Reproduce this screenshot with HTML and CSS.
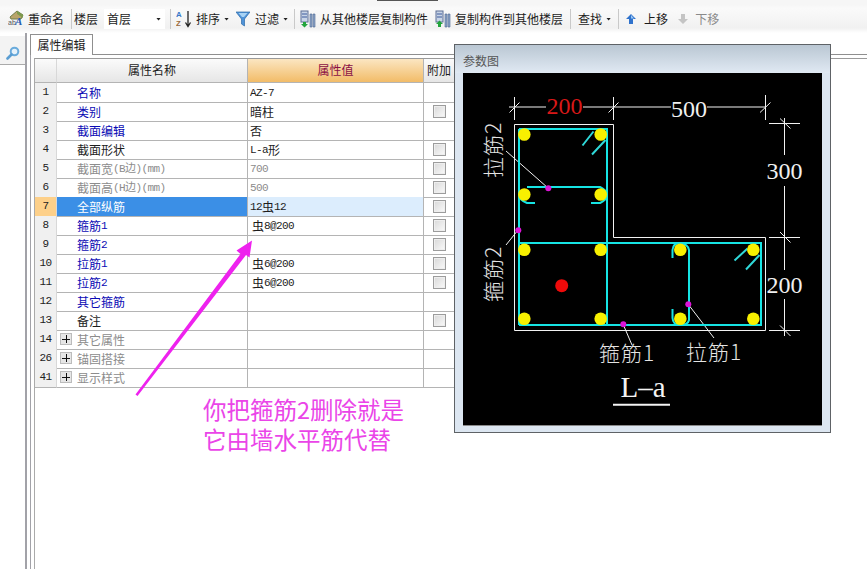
FILE: index.html
```html
<!DOCTYPE html>
<html lang="zh-CN">
<head>
<meta charset="utf-8">
<title>属性编辑</title>
<link rel="stylesheet" href="styles.css">
</head>
<body>
<div class="page">
  <div class="top-mark"></div>
  <div class="toolbar">
    <svg class="icon16" viewBox="0 0 16 18"><path d="M2 7 9 1l6 4-2 4H3z" fill="#b9a46a" stroke="#6f7d4a"/><path d="M9 1l6 4v3L9 4z" fill="#7c9a4c"/><text x="0" y="15" class="ic-ab">ab</text><text x="7" y="15" class="ic-a">A</text></svg>
    <span class="gap4">重命名</span>
    <i class="sep s-a"></i>
    <span>楼层</span>
    <div class="select"><span>首层</span><b class="caret"></b></div>
    <i class="sep s-b"></i>
    <svg class="icon16" viewBox="0 0 16 18"><text x="0" y="7.200" class="ic-az blue">A</text><text x="0" y="16" class="ic-az brown">Z</text><path d="M12 1v15M9.500 12.500 12 16.500l2.500-4" fill="none" stroke="#222" stroke-width="1.300"/></svg>
    <span class="gap4">排序</span><b class="caret gap4"></b>
    <svg class="icon14 m7" viewBox="0 0 14 16"><path d="M0 1h14L8.500 8v7l-3-2V8z" fill="#4f93d8" stroke="#2c6aa8" stroke-width=".7"/><path d="M2.500 2h9L8 6H6z" fill="#a8d3f5"/></svg>
    <span class="gap5">过滤</span><b class="caret gap4"></b>
    <i class="sep s-c"></i>
    <svg class="icon16" viewBox="0 0 16 18"><rect x="1" y="1" width="7" height="11" fill="#c8d4e6" stroke="#5d6f95"/><path d="M2 4h5M2 7h5" stroke="#3c5a9c"/><path d="M10 4h2v13h-2zM13 4h2v13h-2z" fill="#8fa5c8" stroke="#4b6490" stroke-width=".6"/><path d="M3 12h3v2h2l-3.500 3.500L1 14h2z" fill="#22a43c"/></svg>
    <span class="gap4">从其他楼层复制构件</span>
    <svg class="icon16 m7" viewBox="0 0 16 18"><rect x="1" y="1" width="7" height="11" fill="#c8d4e6" stroke="#5d6f95"/><path d="M2 4h5M2 7h5" stroke="#3c5a9c"/><path d="M10 4h2v13h-2zM13 4h2v13h-2z" fill="#8fa5c8" stroke="#4b6490" stroke-width=".6"/><path d="M3 17v-3H1l3.500-3.500L8 14H6v3z" fill="#22a43c"/></svg>
    <span class="gap4">复制构件到其他楼层</span>
    <i class="sep s-d"></i>
    <span>查找</span><b class="caret gap4"></b>
    <i class="sep s-d"></i>
    <svg class="icon10" viewBox="0 0 10 12"><path d="M5 1l5 5H7v5H3V6H0z" fill="#2f72cc"/><path d="M5 2 8 5.500H5z" fill="#9cc8f5"/></svg>
    <span class="gap8">上移</span>
    <svg class="icon10 m10" viewBox="0 0 10 12"><path d="M5 11 0 6h3V1h4v5h3z" fill="#c4c4c4"/></svg>
    <span class="gap7 off">下移</span>
  </div>

  <div class="main">
    <aside class="side">
      <div class="search-btn">
        <svg class="icon14" viewBox="0 0 14 14"><circle cx="8.500" cy="5.500" r="3.800" fill="#e6f2fb" stroke="#6aabdc" stroke-width="2"/><path d="M5.500 8.500 1.500 12.500" stroke="#5a9dd2" stroke-width="2.600" stroke-linecap="round"/></svg>
      </div>
    </aside>
    <section class="content">
      <div class="tabs"><div class="tab">属性编辑</div></div>
      <div class="tabpage">
        <div class="grid">
          <div class="row head">
            <div class="num"></div>
            <div class="hname">属性名称</div>
            <div class="hvalue">属性值</div>
            <div class="hextra">附加</div>
          </div>
          <div class="row"><div class="num">1</div><div class="name link">名称</div><div class="value">AZ-7</div><div class="extra"></div></div>
          <div class="row"><div class="num">2</div><div class="name link">类别</div><div class="value"><span class="cjk">暗柱</span></div><div class="extra"><i class="check"></i></div></div>
          <div class="row"><div class="num">3</div><div class="name link">截面编辑</div><div class="value"><span class="cjk">否</span></div><div class="extra"></div></div>
          <div class="row"><div class="num">4</div><div class="name">截面形状</div><div class="value">L-a<span class="cjk">形</span></div><div class="extra"><i class="check"></i></div></div>
          <div class="row"><div class="num">5</div><div class="name muted">截面宽<span class="unit">(B边)(mm)</span></div><div class="value muted">700</div><div class="extra"><i class="check"></i></div></div>
          <div class="row"><div class="num">6</div><div class="name muted">截面高<span class="unit">(H边)(mm)</span></div><div class="value muted">500</div><div class="extra"><i class="check"></i></div></div>
          <div class="row selected"><div class="num">7</div><div class="name">全部纵筋</div><div class="value">12<span class="cjk">虫</span>12</div><div class="extra"><i class="check"></i></div></div>
          <div class="row"><div class="num">8</div><div class="name link">箍筋<span class="digit">1</span></div><div class="value indent"><span class="cjk">虫</span>8@200</div><div class="extra"><i class="check"></i></div></div>
          <div class="row"><div class="num">9</div><div class="name link">箍筋<span class="digit">2</span></div><div class="value"></div><div class="extra"><i class="check"></i></div></div>
          <div class="row"><div class="num">10</div><div class="name link">拉筋<span class="digit">1</span></div><div class="value indent"><span class="cjk">虫</span>6@200</div><div class="extra"><i class="check"></i></div></div>
          <div class="row"><div class="num">11</div><div class="name link">拉筋<span class="digit">2</span></div><div class="value indent"><span class="cjk">虫</span>6@200</div><div class="extra"><i class="check"></i></div></div>
          <div class="row"><div class="num">12</div><div class="name link">其它箍筋</div><div class="value"></div><div class="extra"></div></div>
          <div class="row"><div class="num">13</div><div class="name">备注</div><div class="value"></div><div class="extra"><i class="check"></i></div></div>
          <div class="row"><div class="num">14</div><div class="name muted"><i class="plus"></i>其它属性</div><div class="value"></div><div class="extra"></div></div>
          <div class="row"><div class="num">26</div><div class="name muted"><i class="plus"></i>锚固搭接</div><div class="value"></div><div class="extra"></div></div>
          <div class="row"><div class="num">41</div><div class="name muted"><i class="plus"></i>显示样式</div><div class="value"></div><div class="extra"></div></div>
        </div>
      </div>
    </section>
  </div>

  <svg class="arrow" viewBox="0 0 867 569"><polygon points="135.500,394.500 240.500,254 236.500,250.500 252,240.500 249.500,257.500 246,255 137.500,396" fill="#ee22ee"/></svg>
  <div class="note">你把箍筋2删除就是<br>它由墙水平筋代替</div>

  <div class="window">
    <div class="win-title">参数图</div>
    <svg class="diagram" viewBox="463 73 359 352">
      <g class="outline">
        <path d="M514.500 124.500H613.500V237.500H765.500V330.500H514.500Z"/>
      </g>
      <g class="dim">
        <path d="M514.500 97V120M613.500 97V120M765.500 95V120M509 107H546M583 107H671M707 107H766"/>
        <path d="M769 123.500H800M769 237.500H800M769 330.500H800M784.500 118V155M784.500 186V270M784.500 299V336"/>
        <path d="M509.500 112.500 519.500 102.500M608.500 112.500 618.500 102.500M760 112.500 770.500 102.500M780 118.500 790.500 128.500M780 232 790.500 242.500M780 325.500 790.500 336"/>
        <path d="M548 188 506 151M518 230 506 245M623 324 632 345M688 304 714 338"/>
      </g>
      <g class="rebar">
        <path d="M519 129H607V325M519 129V325M519 243H761V325H519"/>
        <path d="M535 203H527Q519 200 519 194M527 187H600Q606 190 607 194M591 203H600Q606 200 607 196"/>
        <path d="M672.500 258V250Q673 243 680 243Q688 244 689 250V320Q688 325 680 325Q673 325 672.500 318V309"/>
      </g>
      <g class="hook">
        <path d="M593.500 131.500 582.500 145.500M605.500 140 592 154.500M747.500 248.500 734.500 260.500M759.500 255 746 269.500"/>
      </g>
      <g class="bars">
        <circle cx="524.300" cy="134.500" r="6.300"/><circle cx="600.700" cy="134.500" r="6.300"/>
        <circle cx="524.300" cy="194.500" r="6.300"/><circle cx="600.700" cy="194.500" r="6.300"/>
        <circle cx="524.300" cy="249.700" r="6.300"/><circle cx="600.700" cy="249.700" r="6.300"/>
        <circle cx="524.300" cy="318.700" r="6.300"/><circle cx="600.700" cy="318.700" r="6.300"/>
        <circle cx="680.300" cy="249.700" r="6.300"/><circle cx="680.300" cy="318.700" r="6.300"/>
        <circle cx="753.300" cy="249.700" r="6.300"/><circle cx="753.300" cy="318.700" r="6.300"/>
      </g>
      <circle class="center" cx="561.700" cy="285.700" r="6.500"/>
      <g class="picks">
        <circle cx="548.300" cy="188.300" r="3"/><circle cx="518.300" cy="230.300" r="3"/>
        <circle cx="623.300" cy="324.300" r="3"/><circle cx="688.300" cy="304.300" r="3"/>
      </g>
      <text class="size red" x="546.500" y="114">200</text>
      <text class="size" x="671" y="116.500">500</text>
      <text class="size" x="766.500" y="179">300</text>
      <text class="size" x="766.500" y="293">200</text>
      <text class="label" transform="translate(501 178) rotate(-90)">拉筋2</text>
      <text class="label" transform="translate(501 302) rotate(-90)">箍筋2</text>
      <text class="label" x="599" y="361">箍筋1</text>
      <text class="label" x="686" y="360">拉筋1</text>
      <text class="title-la" x="620.500" y="397">L–a</text>
      <path class="under" d="M613 404.800H670"/>
    </svg>
  </div>
</div>
</body>
</html>
```
FILE: styles.css
```css
* { box-sizing: border-box; }
html, body { margin: 0; height: 100%; background: #fff; overflow: hidden; }
body { font: 12px/16px "Noto Sans CJK SC", "Liberation Sans", sans-serif; color: #1c1c1c; }
i, b { display: block; font-style: normal; font-weight: normal; }

.page { position: relative; width: 867px; height: 569px; display: flex; flex-direction: column; overflow: hidden; }
.top-mark { position: absolute; left: 377px; top: 0; width: 61px; height: 1px; background: #555; }

/* toolbar */
.toolbar { height: 33px; padding: 5px 0 0 8px; display: flex; align-items: center; flex: none;
  background: linear-gradient(#f6f6f6 0, #f6f6f6 5px, #fafafa 8px, #f1f1f1 28px, #fff 33px); white-space: nowrap; }
.icon16 { width: 16px; height: 18px; flex: none; }
.icon14 { width: 14px; height: 16px; flex: none; }
.icon10 { width: 10px; height: 12px; flex: none; }
.gap4 { margin-left: 4px; }
.gap5 { margin-left: 5px; }
.gap7 { margin-left: 7px; }
.gap8 { margin-left: 8px; }
.m7 { margin-left: 7px; }
.m10 { margin-left: 10px; }
.off { color: #8a8a8a; }
.sep { width: 1px; height: 20px; background: #c9c9c9; flex: none; }
.s-a { margin: 0 2px 0 7px; }
.s-b { margin: 0 5px; }
.s-c { margin: 0 5px 0 6px; }
.s-d { margin: 0 7px; }
.caret { width: 5px; height: 3px; background: #222; clip-path: polygon(0 0, 100% 0, 50% 100%); flex: none; }
.select { width: 61px; height: 20px; margin-left: 6px; padding: 0 4px 0 3px; background: #fff; display: flex; align-items: center; justify-content: space-between; }
.ic-ab { font: 7px "Liberation Sans", sans-serif; fill: #555; }
.ic-a { font: italic bold 11px "Liberation Serif", serif; fill: #2a5db0; }
.ic-az { font: bold 7.800px "Liberation Sans", sans-serif; }
.blue { fill: #3a78c8; }
.brown { fill: #9a6a3a; }

/* main */
.main { flex: 1; display: flex; min-height: 0; }
.side { width: 27px; flex: none; border-right: 2px solid #a2a2a8; padding-top: 3px; }
.search-btn { height: 29px; background: #f3f3f3; border-bottom: 1px solid #aaa; display: flex; align-items: center; justify-content: center; padding-top: 6px; }
.content { flex: 1; min-width: 0; margin-left: 3px; padding-top: 1px; display: flex; flex-direction: column; }
.tabs { height: 20px; flex: none; display: flex; }
.tab { width: 63px; height: 21px; border: 1px solid #8f8f8f; border-bottom: 0; background: #fff; position: relative; z-index: 1; text-align: center; line-height: 19px; }
.tabpage { flex: 1; border-top: 1px solid #8f8f8f; border-left: 1px solid #a2a2a8; padding: 3px 0 0 3px; min-height: 0; }
.grid { height: 100%; border-left: 1px solid #aaa; border-top: 1px solid #9a9a9a; }

/* property grid */
.row { display: grid; grid-template-columns: 22px 191px 176px 37px; height: 19px; }
.row > div { border-bottom: 1px solid #b4b4b4; border-right: 1px solid #b4b4b4; }
.head { height: 24px; }
.num { background: #f0f0f0; text-align: center; font: 11px/18px "Liberation Mono", monospace; letter-spacing: -.6px; color: #222; border-right-color: #d8d8d8 !important; }
.head .num { background: linear-gradient(#fbfbfb, #e6e6e6); }
.hname { background: linear-gradient(#fbfbfb, #e6e6e6); text-align: center; line-height: 22px; }
.hvalue { background: linear-gradient(#fbe6c2, #f2bc68); text-align: center; line-height: 22px; color: #8a0f45; }
.hextra { background: linear-gradient(#fbfbfb, #e6e6e6); padding-left: 3px; line-height: 22px; white-space: nowrap; overflow: hidden; }
.name { padding-left: 20px; line-height: 19px; display: flex; align-items: center; position: relative; white-space: nowrap; }
.link { color: #0a0ab4; }
.muted { color: #8c8c8c; }
.unit { font: 11px/18px "Liberation Mono", "Noto Sans CJK SC", monospace; letter-spacing: -.6px; }
.digit { font: 11px/18px "Liberation Mono", monospace; letter-spacing: -.6px; }
.value { padding-left: 2px; font: 11px/18px "Liberation Mono", "Noto Sans CJK SC", monospace; letter-spacing: -.6px; white-space: nowrap; display: flex; align-items: center; }
.indent { padding-left: 4px; }
.cjk { font: 12px/16px "Noto Sans CJK SC", sans-serif; letter-spacing: 0; }
.extra { display: flex; align-items: center; padding-left: 9px; }
.check { width: 13px; height: 13px; border: 1px solid #9c9c9c; background: linear-gradient(135deg, #d8d8d8, #fafafa); box-shadow: inset 0 0 0 1px #eee; }
.plus { position: absolute; left: 3px; top: 3px; width: 12px; height: 12px; border: 1px solid #bcbcbc; background:
  linear-gradient(#111, #111) center / 8px 1px no-repeat,
  linear-gradient(#111, #111) center / 1px 8px no-repeat,
  #e6e6e6; }
.selected .num { background: #fdd08a; }
.selected .name { background: #3b8fe6; color: #fff; }
.selected .value { background: #dcedfd; }

/* overlays */
.arrow { position: absolute; inset: 0; width: 867px; height: 569px; pointer-events: none; }
.note { position: absolute; left: 203px; top: 394px; font-size: 23.500px; line-height: 30px; color: #ea45e8; white-space: nowrap; }

/* floating window */
.window { position: absolute; left: 454px; top: 44px; width: 377px; height: 389px; border: 1px solid #5e6266; background: #dce6f1; padding: 0 8px; }
.win-title { height: 28px; margin: 0 -8px; padding: 8px 8px 0; line-height: 16px; color: #555; background: linear-gradient(#bac7d3, #e0e9f3); }
.diagram { display: block; width: 359px; height: 352px; background: #000; box-shadow: 0 1px 0 #8a8a8a; }
.outline path { fill: none; stroke: #f2f2f2; stroke-width: 1; }
.dim path { fill: none; stroke: #f2f2f2; stroke-width: 1; }
.rebar path { fill: none; stroke: #16e4e4; stroke-width: 2; }
.hook path { fill: none; stroke: #2fd8d8; stroke-width: 2; }
.bars circle { fill: #f8f000; }
.center { fill: #ee0a0a; }
.picks circle { fill: #dd14d8; }
.size { font: 24px "Liberation Serif", serif; fill: #f0f0f0; }
.red { fill: #d81818; }
.label { font: 300 21px "Noto Sans CJK SC", sans-serif; fill: #e4e4e4; letter-spacing: 1px; }
.title-la { font: 29px "Liberation Serif", serif; fill: #f4f4f4; }
.under { stroke: #f4f4f4; stroke-width: 2; fill: none; }
```
